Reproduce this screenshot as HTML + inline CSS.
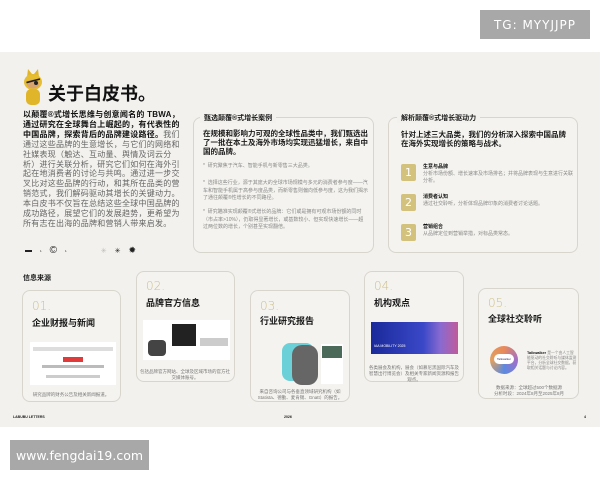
<!DOCTYPE html>
<html><head><meta charset="utf-8">
<style>
*{margin:0;padding:0;box-sizing:border-box}
body{width:600px;height:480px;background:#fff;position:relative;overflow:hidden;font-family:"Liberation Sans","Noto Sans CJK SC",sans-serif;color:#1a1a1a}
.a{position:absolute}
.bg{left:0;top:52px;width:600px;height:375px;background:#f2f1ed}
.wm{background:#a8a8a8;color:#fff;font-family:"DejaVu Sans",sans-serif;display:flex;align-items:center;justify-content:center}
.card{border:1px solid #d8d5cc;border-radius:8px;background:#f4f3ef}
.num{color:#cdc08a;font-size:12px;font-family:"DejaVu Sans",sans-serif;font-weight:300}
.ct{font-size:9px;font-weight:bold}
.cap{font-size:4.5px;color:#777;text-align:center;line-height:6px}
.p{font-size:8px;line-height:9.9px;color:#666;letter-spacing:0.25px;white-space:nowrap}
.p b{color:#111}
.g{font-size:5px;color:#888;line-height:7.5px}
.box{width:15px;height:17px;background:#d3c27e;color:#fff;border-radius:2px;font-size:11px;display:flex;align-items:center;justify-content:center;font-family:"DejaVu Sans",sans-serif}
.h{font-size:7.5px;font-weight:bold;line-height:9px;white-space:nowrap}
</style></head><body>
<div class="a bg"></div>
<div class="a wm" style="left:480px;top:10px;width:110px;height:29px;font-size:12px;letter-spacing:1px">TG: MYYJJPP</div>

<svg class="a" style="left:22px;top:68px" width="22" height="38" viewBox="0 0 22 38">
<path d="M5 9 L6 1 L10 6 L12 6 L16 1 L17 9 Z" fill="#e0b52a"/>
<ellipse cx="11" cy="14" rx="9" ry="8" fill="#e6bc30"/>
<ellipse cx="11" cy="16" rx="6" ry="4.5" fill="#d9a36e"/>
<rect x="4" y="12" width="14" height="1.6" fill="#222" transform="rotate(-15 11 12)"/>
<circle cx="14" cy="15" r="2" fill="#222"/>
<rect x="4" y="21" width="14" height="16" rx="5" fill="#e0b52a"/>
</svg>
<div class="a" style="left:48px;top:80px;font-size:18px;font-weight:bold;color:#111">关于白皮书。</div>

<div class="a p" style="left:23px;top:110px"><b>以颠覆®式增长思维与创意闻名的 TBWA，<br>通过研究在全球舞台上崛起的，有代表性的<br>中国品牌，探索背后的品牌建设路径。</b>我们<br>通过这些品牌的生意增长，与它们的网络和<br>社媒表现（触达、互动量、舆情及词云分<br>析）进行关联分析，研究它们如何在海外引<br>起在地消费者的讨论与共鸣。通过进一步交<br>叉比对这些品牌的行动，和其所在品类的营<br>销范式，我们解码驱动其增长的关键动力。<br>本白皮书不仅旨在总结这些全球中国品牌的<br>成功路径，展望它们的发展趋势，更希望为<br>所有志在出海的品牌和营销人带来启发。</div>

<div class="a" style="left:25px;top:245px;font-size:7px;color:#222;display:flex;gap:8px;align-items:center"><span style="display:inline-block;width:7px;height:2px;background:#222"></span><span style="font-size:3px">1</span><span style="font-size:10px">©</span><span style="font-size:3px">1</span><span style="width:18px"></span><span style="color:#bbb">✳</span><span>✳</span><span style="font-size:9px">✹</span></div>

<div class="a card" style="left:193px;top:117px;width:181px;height:136px"></div>
<div class="a" style="left:200px;top:113px;padding:0 4px;background:#f2f1ed;font-size:7px;font-weight:bold">甄选颠覆®式增长案例</div>
<div class="a h" style="left:203px;top:129px">在规模和影响力可观的全球性品类中，我们甄选出<br>了一批在本土及海外市场均实现迅猛增长，来自中<br>国的品牌。</div>
<div class="a g" style="left:203px;top:163px;width:165px">*&nbsp; 研究聚焦于汽车、智能手机与新零售三大品类。</div>
<div class="a g" style="left:203px;top:180px;width:165px">*&nbsp; 选择这些行业，源于其庞大的全球市场规模与多元的消费者参与度——汽车和智能手机属于高参与度品类，而新零售则偏向低参与度，这为我们揭示了通往颠覆®性增长的不同路径。</div>
<div class="a g" style="left:203px;top:209px;width:165px">*&nbsp; 研究瞄准实现颠覆®式增长的品牌：它们或是拥有可观市场份额的同时（市占率&gt;10%），仍取得显著增长，或基数较小、但实现快速增长——超过两位数的增长，个别甚至实现翻倍。</div>

<div class="a card" style="left:388px;top:117px;width:190px;height:136px"></div>
<div class="a" style="left:397px;top:113px;padding:0 4px;background:#f2f1ed;font-size:7px;font-weight:bold">解析颠覆®式增长驱动力</div>
<div class="a h" style="left:401px;top:130px">针对上述三大品类，我们的分析深入探索中国品牌<br>在海外实现增长的策略与战术。</div>
<div class="a box" style="left:401px;top:164px">1</div>
<div class="a box" style="left:401px;top:194px">2</div>
<div class="a box" style="left:401px;top:224px">3</div>
<div class="a g" style="left:423px;top:164px;width:150px;line-height:7px"><b style="color:#111">生意与品牌</b><br>分析市场份额、增长速率及市场排名；并将品牌表现与生意进行关联分析。</div>
<div class="a g" style="left:423px;top:194px;width:150px;line-height:7px"><b style="color:#111">消费者认知</b><br>通过社交聆听，分析体现品牌印象的消费者讨论话题。</div>
<div class="a g" style="left:423px;top:224px;width:150px;line-height:7px"><b style="color:#111">营销组合</b><br>从品牌定位到营销举措，对标品类常态。</div>

<div class="a" style="left:23px;top:273px;font-size:7px;font-weight:bold">信息来源</div>

<div class="a card" style="left:22px;top:290px;width:99px;height:112px"></div>
<div class="a num" style="left:32px;top:299px">01.</div>
<div class="a ct" style="left:32px;top:316px">企业财报与新闻</div>
<div class="a" style="left:30px;top:342px;width:86px;height:43px;background:#fff"></div>
<div class="a" style="left:33px;top:347px;width:80px;height:4px;background:#ddd"></div>
<div class="a" style="left:63px;top:357px;width:20px;height:5px;background:#e03a3a"></div>
<div class="a" style="left:42px;top:365px;width:62px;height:3px;background:#bbb"></div>
<div class="a" style="left:46px;top:375px;width:54px;height:3px;background:#ccc"></div>
<div class="a cap" style="left:26px;top:392px;width:90px">研究品牌的财务公告及相关新闻报道。</div>

<div class="a card" style="left:136px;top:271px;width:99px;height:111px"></div>
<div class="a num" style="left:146px;top:279px">02.</div>
<div class="a ct" style="left:146px;top:296px">品牌官方信息</div>
<div class="a" style="left:143px;top:320px;width:87px;height:40px;background:#fff"></div>
<div class="a" style="left:148px;top:340px;width:18px;height:16px;background:#444;border-radius:4px"></div>
<div class="a" style="left:172px;top:324px;width:24px;height:22px;background:#222"></div>
<div class="a" style="left:200px;top:338px;width:28px;height:8px;background:#ccc"></div>
<div class="a cap" style="left:140px;top:369px;width:90px">包括品牌官方网站、全球及区域市场的官方社交媒体账号。</div>

<div class="a card" style="left:250px;top:290px;width:100px;height:112px"></div>
<div class="a num" style="left:260px;top:299px">03.</div>
<div class="a ct" style="left:260px;top:314px">行业研究报告</div>
<div class="a" style="left:282px;top:343px;width:32px;height:38px;background:#6cd0d8;border-radius:8px"></div>
<div class="a" style="left:292px;top:345px;width:26px;height:40px;background:#666;border-radius:10px"></div>
<div class="a" style="left:321px;top:344px;width:22px;height:40px;background:#fff"></div>
<div class="a" style="left:322px;top:346px;width:20px;height:12px;background:#4b6a5a"></div>
<div class="a cap" style="left:254px;top:389px;width:92px">来自咨询公司与各垂直领域研究机构（如 Statista、德勤、麦肯锡、Gnatt）的报告。</div>

<div class="a card" style="left:364px;top:271px;width:100px;height:111px"></div>
<div class="a num" style="left:374px;top:279px">04.</div>
<div class="a ct" style="left:374px;top:296px">机构观点</div>
<div class="a" style="left:371px;top:322px;width:87px;height:32px;background:linear-gradient(90deg,#1a2a9a,#3a48c8 60%,#8a6ad0 80%,#c05a9a)"></div>
<div class="a" style="left:374px;top:344px;font-size:3.5px;color:#fff">IAA MOBILITY 2025</div>
<div class="a cap" style="left:368px;top:365px;width:92px">各类展会及机构，展会（如慕尼黑国际汽车及智慧出行博览会）及相关专家新闻资源和报告观点。</div>

<div class="a card" style="left:478px;top:288px;width:101px;height:111px"></div>
<div class="a num" style="left:488px;top:296px">05.</div>
<div class="a ct" style="left:488px;top:312px">全球社交聆听</div>
<div class="a" style="left:490px;top:346px;width:28px;height:28px;border-radius:50%;background:conic-gradient(#e88a5a,#a070c8,#5a8ae0,#e0a060,#e88a5a)"></div>
<div class="a" style="left:494px;top:354px;width:20px;height:10px;border-radius:5px;background:#fff;font-size:3px;color:#336;text-align:center;line-height:10px">Talkwalker</div>
<div class="a g" style="left:527px;top:351px;width:50px;font-size:3.8px;line-height:5px"><b style="color:#111">Talkwalker</b> 是一个由人工智能驱动的社交聆听与媒体监测平台，分析全球社交数据，获取相关话题与讨论内容。</div>
<div class="a cap" style="left:482px;top:385px;width:94px">数据来源：全球超过500个数据源<br>分析时段：2024年8月至2025年8月</div>

<div class="a" style="left:13px;top:415px;font-size:3.5px;font-weight:bold">LABUBU LETTERS</div>
<div class="a" style="left:284px;top:415px;font-size:3.5px;font-weight:bold">2026</div>
<div class="a" style="left:584px;top:415px;font-size:3.5px;font-weight:bold">4</div>

<div class="a wm" style="left:10px;top:440px;width:139px;height:30px;font-size:12.5px">www.fengdai19.com</div>
</body></html>
